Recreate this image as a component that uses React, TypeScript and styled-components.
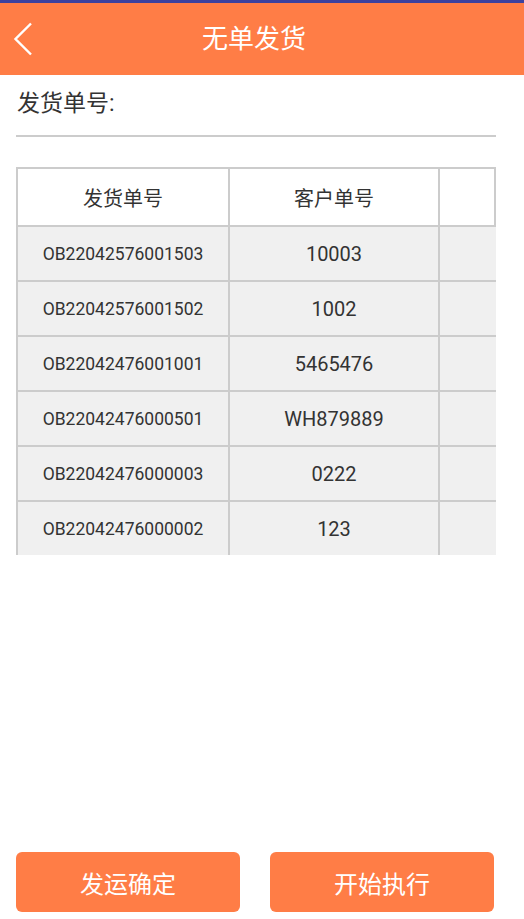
import styled, { createGlobalStyle } from 'styled-components'

const ORANGE = '#ff7d46'
const LINE = '#cccccc'

const GlobalStyle = createGlobalStyle`
  html, body {
    margin: 0;
    padding: 0;
    background: #ffffff;
  }
  body {
    font-family: Roboto, "Noto Sans CJK SC", sans-serif;
    color: #333333;
  }
`

const Page = styled.div`
  min-height: 100vh;
  display: flex;
  flex-direction: column;
  box-sizing: border-box;
`

const StatusStrip = styled.div`
  height: 3px;
  background: #3c419f;
`

const TopBar = styled.header`
  height: 72px;
  background: ${ORANGE};
  display: grid;
  grid-template-columns: 40px 1fr 56px;
  align-items: center;
`

const BackButton = styled.button`
  border: 0;
  background: none;
  padding: 0 0 0 13px;
  height: 100%;
  display: flex;
  align-items: center;
  cursor: pointer;
`

const Title = styled.h1`
  margin: 0;
  font-size: 26px;
  font-weight: 400;
  color: #ffffff;
  text-align: center;
  line-height: 1;
`

const Content = styled.main`
  padding: 0 28px 0 16px;
`

const FieldLabel = styled.div`
  padding: 13px 0 0 1px;
  font-size: 23px;
  line-height: 32px;
  color: #333333;
`

const Underline = styled.div`
  margin-top: 15px;
  height: 2px;
  background: ${LINE};
`

const Table = styled.div`
  margin-top: 30px;
  width: 480px;
  overflow: hidden;
`

const HeaderRow = styled.div`
  display: grid;
  grid-template-columns: 210px 210px 52px;
  border: 2px solid ${LINE};
  background: #ffffff;
  height: 56px;
`

const BodyRow = styled.div<{ $last?: boolean }>`
  display: grid;
  grid-template-columns: 210px 210px 1fr;
  border-left: 2px solid ${LINE};
  border-bottom: ${(p) => (p.$last ? '0' : `2px solid ${LINE}`)};
  background: #f0f0f0;
  height: 53px;
`

const Cell = styled.div<{ $size: number }>`
  display: flex;
  align-items: center;
  justify-content: center;
  font-size: ${(p) => p.$size}px;
  color: #333333;
  white-space: nowrap;
  & + & {
    border-left: 2px solid ${LINE};
  }
`

const Footer = styled.footer`
  margin-top: auto;
  display: grid;
  grid-template-columns: 224px 224px;
  column-gap: 30px;
  padding: 0 30px 7px 16px;
`

const ActionButton = styled.button`
  height: 60px;
  border: 0;
  border-radius: 6px;
  background: ${ORANGE};
  color: #ffffff;
  font-family: Roboto, "Noto Sans CJK SC", sans-serif;
  font-size: 24px;
  cursor: pointer;
`

const orders = [
  { id: 'OB22042576001503', customer: '10003' },
  { id: 'OB22042576001502', customer: '1002' },
  { id: 'OB22042476001001', customer: '5465476' },
  { id: 'OB22042476000501', customer: 'WH879889' },
  { id: 'OB22042476000003', customer: '0222' },
  { id: 'OB22042476000002', customer: '123' },
]

const App = () => {
  return (
    <Page>
      <GlobalStyle />
      <StatusStrip />
      <TopBar>
        <BackButton aria-label='返回'>
          <svg width='20' height='34' viewBox='0 0 20 34'>
            <polyline
              points='18,1.5 2.5,17 18,32.5'
              fill='none'
              stroke='#ffffff'
              strokeWidth='2.4'
            />
          </svg>
        </BackButton>
        <Title>无单发货</Title>
        <span />
      </TopBar>
      <Content>
        <FieldLabel>发货单号:</FieldLabel>
        <Underline />
        <Table>
          <HeaderRow>
            <Cell $size={20}>发货单号</Cell>
            <Cell $size={20}>客户单号</Cell>
            <Cell $size={20} />
          </HeaderRow>
          {orders.map((order, i) => (
            <BodyRow key={order.id} $last={i === orders.length - 1}>
              <Cell $size={17.5}>{order.id}</Cell>
              <Cell $size={20}>{order.customer}</Cell>
              <Cell $size={20} />
            </BodyRow>
          ))}
        </Table>
      </Content>
      <Footer>
        <ActionButton>发运确定</ActionButton>
        <ActionButton>开始执行</ActionButton>
      </Footer>
    </Page>
  )
}

export default App
